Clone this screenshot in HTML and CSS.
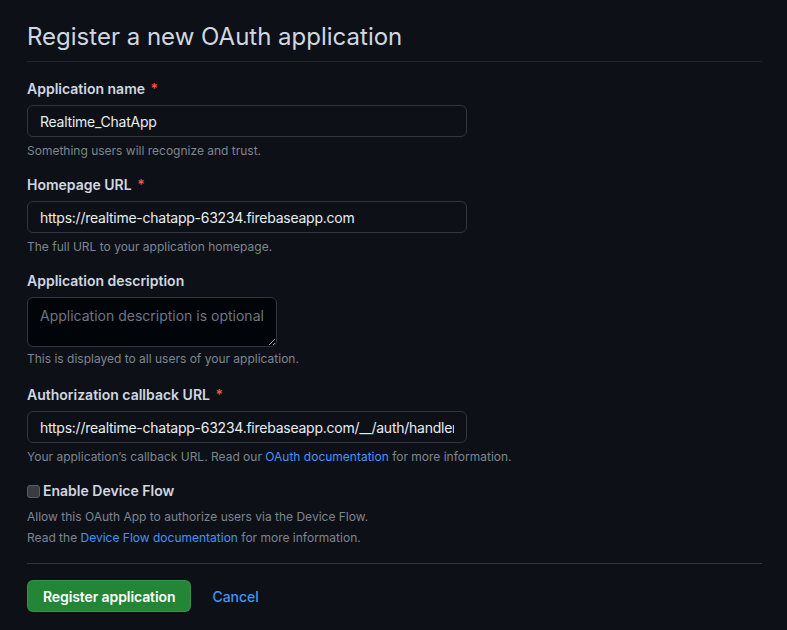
FILE: index.html
```html
<!DOCTYPE html>
<html lang="en">
<head>
<meta charset="utf-8">
<title>Register a new OAuth application</title>
<link rel="stylesheet" href="styles.css">
</head>
<body>
<main class="page">
  <h1 class="title">Register a new OAuth application</h1>
  <form class="form">
    <div class="group">
      <label class="label">Application name <span class="req">*</span></label>
      <input class="input" type="text" value="Realtime_ChatApp">
      <p class="note">Something users will recognize and trust.</p>
    </div>
    <div class="group">
      <label class="label">Homepage URL <span class="req">*</span></label>
      <input class="input" type="text" value="https://realtime-chatapp-63234.firebaseapp.com">
      <p class="note">The full URL to your application homepage.</p>
    </div>
    <div class="group">
      <label class="label">Application description</label>
      <textarea class="textarea" placeholder="Application description is optional"></textarea>
      <p class="note">This is displayed to all users of your application.</p>
    </div>
    <div class="group">
      <label class="label">Authorization callback URL <span class="req">*</span></label>
      <input class="input" type="text" value="https://realtime-chatapp-63234.firebaseapp.com/__/auth/handler">
      <p class="note">Your application’s callback URL. Read our <a class="link" href="#">OAuth documentation</a> for more information.</p>
    </div>
    <div class="check-group">
      <label class="check-label"><input class="checkbox" type="checkbox">Enable Device Flow</label>
      <p class="note">Allow this OAuth App to authorize users via the Device Flow.</p>
      <p class="note">Read the <a class="link" href="#">Device Flow documentation</a> for more information.</p>
    </div>
    <div class="actions">
      <button class="btn" type="button">Register application</button>
      <a class="cancel" href="#">Cancel</a>
    </div>
  </form>
</main>
</body>
</html>
```
FILE: styles.css
```css
html, body {
  margin: 0;
  padding: 0;
  background: #0d1117;
}
body {
  font-family: Inter, "Noto Sans", sans-serif;
  color: #e6edf3;
  font-size: 14px;
}
.page {
  width: 735px;
  padding: 20px 0 0 27px;
}
.title {
  margin: 0;
  font-size: 24px;
  font-weight: 400;
  line-height: 33px;
  color: #d1d7e0;
  padding-bottom: 8px;
  border-bottom: 1px solid #21262d;
}
.form {
  display: flex;
  flex-direction: column;
  padding-top: 17px;
}
.group {
  display: flex;
  flex-direction: column;
  height: 96px;
}
.label {
  font-weight: 600;
  font-size: 14px;
  line-height: 20px;
  color: #d1d7e0;
  margin-bottom: 6px;
}
.req { color: #f85149; margin-left: 2px; }
.input, .textarea {
  box-sizing: border-box;
  width: 440px;
  height: 32px;
  background: #0d1117;
  border: 1px solid #30363d;
  border-radius: 6px;
  color: #e6edf3;
  font-family: inherit;
  font-size: 14px;
  letter-spacing: -0.25px;
  padding: 0 12px;
  outline: none;
}
.textarea {
  width: 250px;
  height: 50px;
  background: #010409;
  padding: 8px 12px;
  resize: vertical;
  line-height: 20px;
  letter-spacing: 0;
}
.textarea::placeholder { color: #6e7681; }
.note {
  margin: 5px 0 0;
  font-size: 12px;
  line-height: 18px;
  color: #7d8590;
}
.group:nth-child(3) { height: 114px; }
.group:nth-child(3) .note { margin-top: 3px; }
.link { color: #4493f8; text-decoration: none; }
.check-group {
  display: flex;
  flex-direction: column;
}
.check-label {
  display: flex;
  align-items: center;
  gap: 3px;
  font-weight: 600;
  line-height: 20px;
  color: #d1d7e0;
  margin-bottom: 4px;
}
.checkbox {
  appearance: none;
  width: 13px;
  height: 13px;
  margin: 0;
  border: 1px solid #5a5d63;
  border-radius: 3px;
  background: #3b3c3f;
}
.check-group .note { margin-top: 3px; }
.actions {
  margin-top: 16px;
  padding-top: 16px;
  border-top: 1px solid #30363d;
  display: flex;
  align-items: center;
  gap: 21px;
}
.btn {
  height: 32px;
  padding: 0 15px;
  background: #238636;
  color: #ffffff;
  border: 1px solid rgba(240,246,252,0.1);
  border-radius: 6px;
  font-family: inherit;
  font-size: 14px;
  font-weight: 600;
  letter-spacing: -0.1px;
}
.cancel {
  color: #4493f8;
  text-decoration: none;
  font-weight: 500;
}
```
